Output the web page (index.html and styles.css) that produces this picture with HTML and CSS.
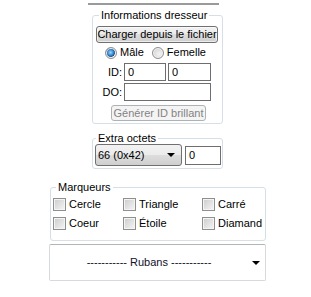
FILE: index.html
```html
<!DOCTYPE html>
<html lang="fr">
<head>
  <meta charset="UTF-8" />
  <title>Dresseur</title>
  <link rel="stylesheet" href="styles.css">
</head>
<body>
  <div class="prev"></div>

  <fieldset class="group info">
    <legend>Informations dresseur</legend>
    <button class="btn load">Charger depuis le fichier</button>
    <div class="gender">
      <span class="opt"><span class="radio on"></span>Mâle</span>
      <span class="opt second"><span class="radio"></span>Femelle</span>
    </div>
    <div class="row">
      <span class="lbl">ID:</span>
      <input type="text" class="box id1" value="0">
      <input type="text" class="box id2" value="0">
    </div>
    <div class="row do">
      <span class="lbl">DO:</span>
      <input type="text" class="box ot" value="">
    </div>
    <button class="btn shiny" disabled>Générer ID brillant</button>
  </fieldset>

  <fieldset class="group extra">
    <legend>Extra octets</legend>
    <div class="extra-row">
      <div class="combo">66 (0x42)<span class="arrow"></span></div>
      <input type="text" class="box num" value="0">
    </div>
  </fieldset>

  <fieldset class="group marks">
    <legend>Marqueurs</legend>
    <div class="grid">
      <span class="chk"><span class="check"></span>Cercle</span>
      <span class="chk"><span class="check"></span>Triangle</span>
      <span class="chk"><span class="check"></span>Carré</span>
      <span class="chk"><span class="check"></span>Coeur</span>
      <span class="chk"><span class="check"></span>Étoile</span>
      <span class="chk"><span class="check"></span>Diamand</span>
    </div>
  </fieldset>

  <div class="ribbons">----------- Rubans -----------<span class="arrow"></span></div>
</body>
</html>
```

FILE: styles.css
```css
* {
  box-sizing: border-box;
}
body {
  margin: 0;
  background-color: #fff;
  color: #000;
  font-family: Tahoma, 'Liberation Sans', Arial, sans-serif;
  font-size: 11px;
  line-height: 13px;
}
.prev {
  margin-left: 88px;
  width: 131px;
  height: 5px;
  border-bottom: 2px solid #9a9a9a;
}
.group {
  margin: 0;
  padding: 0;
  min-width: 0;
  border: 1px solid #d5dfe5;
  border-radius: 3px;
}
.group legend {
  padding: 0 2px;
  line-height: 12px;
}
.info {
  margin: 4px 0 0 92px;
  width: 131px;
  padding-bottom: 2px;
}
.info legend {
  margin-left: 6px;
}
.btn {
  display: block;
  font: inherit;
  color: #000;
  padding: 0;
  border: 1px solid #707070;
  border-radius: 3px;
  background: linear-gradient(#f2f2f2 0%, #ebebeb 50%, #dddddd 50%, #cfcfcf 100%);
  box-shadow: inset 0 0 0 1px rgba(255,255,255,0.6);
  white-space: nowrap;
}
.load {
  margin: 5px 0 0 3px;
  width: 122px;
  height: 17px;
}
.gender {
  display: flex;
  align-items: center;
  margin-top: 3px;
  padding-left: 12px;
  height: 13px;
}
.opt {
  display: flex;
  align-items: center;
}
.opt.second {
  margin-left: 8px;
}
.radio {
  width: 12px;
  height: 12px;
  margin-right: 3px;
  border: 1px solid #8e8f8f;
  border-radius: 50%;
  background: radial-gradient(circle at 60% 60%, #f4f4f4 0%, #d6d6d6 70%, #c9c9c9 100%);
  box-shadow: inset 0 0 0 1px #f6f6f6;
}
.radio.on {
  background: radial-gradient(circle at 45% 45%, #a5d6f7 0%, #2d81c9 40%, #174f8c 55%, #e8e8e8 62%, #dcdcdc 100%);
}
.row {
  display: flex;
  align-items: center;
  margin-top: 4px;
}
.row.do {
  margin-top: 2px;
}
.lbl {
  width: 29px;
  margin-right: 2px;
  text-align: right;
}
.box {
  font: inherit;
  color: #000;
  height: 18px;
  padding: 0 3px;
  border: 1px solid #6e6e6e;
  background: #fff;
  outline: none;
}
.id1 {
  width: 42px;
}
.id2 {
  width: 43px;
  margin-left: 2px;
}
.ot {
  width: 87px;
}
.shiny {
  margin: 4px 0 0 18px;
  width: 95px;
  height: 16px;
  color: #838383;
  border-color: #adb2b5;
  background: #f4f4f4;
  box-shadow: none;
}
.extra {
  margin: 8px 0 0 92px;
  width: 131px;
  padding-bottom: 2px;
}
.extra legend {
  margin-left: 3px;
}
.extra-row {
  display: flex;
  align-items: center;
  padding-left: 2px;
}
.combo {
  position: relative;
  width: 87px;
  height: 22px;
  padding-left: 2px;
  line-height: 20px;
  border: 1px solid #707070;
  border-radius: 3px;
  background: linear-gradient(#f2f2f2 0%, #ebebeb 50%, #dddddd 50%, #cfcfcf 100%);
}
.arrow {
  position: absolute;
  top: 50%;
  right: 6px;
  margin-top: -2px;
  border-left: 4px solid transparent;
  border-right: 4px solid transparent;
  border-top: 4px solid #000;
}
.num {
  width: 36px;
  height: 19px;
  margin-left: 3px;
}
.marks {
  margin: 12px 0 0 50px;
  width: 216px;
  padding: 0 0 10px 0;
}
.marks legend {
  margin-left: 5px;
}
.grid {
  display: grid;
  grid-template-columns: 70px 79px 1fr;
  row-gap: 6px;
  margin-top: 5px;
  padding-left: 2px;
}
.chk {
  display: flex;
  align-items: center;
  height: 13px;
}
.check {
  width: 13px;
  height: 13px;
  margin-right: 3px;
  border: 1px solid #8e8f8f;
  background: linear-gradient(135deg, #cbcbcb, #f6f6f6);
  box-shadow: inset 0 0 0 1px #f4f4f4;
}
.ribbons {
  position: relative;
  margin: 3px 0 0 49px;
  width: 217px;
  height: 37px;
  line-height: 35px;
  padding-right: 17px;
  text-align: center;
  color: #10102a;
  border: 1px solid #d6d9de;
  border-top-color: #b4b4b4;
  border-radius: 2px;
  background: #fff;
}
.ribbons .arrow {
  right: 5px;
}
```
